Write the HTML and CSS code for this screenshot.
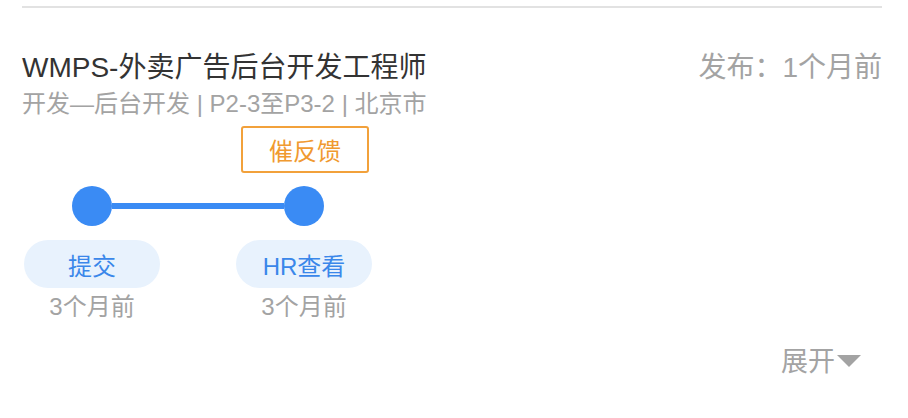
FILE: index.html
```html
<!DOCTYPE html>
<html>
	<head>
		<meta charset="UTF-8">
		<title>投递进度</title>
		<link rel="stylesheet" href="styles.css">
	</head>
	<body>
		<div class="card">
			<div class="divider"></div>
			<div class="head">
				<div class="title">WMPS-外卖广告后台开发工程师</div>
				<div class="pub">发布：1个月前</div>
			</div>
			<div class="sub">开发—后台开发 | P2-3至P3-2 | 北京市</div>

			<div class="progress">
				<div class="feedback-row">
					<div class="btn-feedback">催反馈</div>
				</div>
				<div class="track">
					<span class="dot"></span>
					<span class="bar"></span>
					<span class="dot"></span>
				</div>
				<ul class="steps">
					<li>
						<span class="pill">提交</span>
						<span class="time">3个月前</span>
					</li>
					<li>
						<span class="pill">HR查看</span>
						<span class="time">3个月前</span>
					</li>
				</ul>
			</div>

			<div class="more">
				<span>展开</span>
				<i class="arrow"></i>
			</div>
		</div>
	</body>
</html>
```
FILE: styles.css
```css
html, body {
	margin: 0;
	padding: 0;
	background: #fff;
}
ul, li {
	padding: 0;
	margin: 0;
	list-style: none;
}
.card {
	padding: 0 26px 0 22px;
	font-family: "Liberation Sans", "Noto Sans CJK SC", sans-serif;
	color: #333;
}
.divider {
	margin-top: 6px;
	height: 2px;
	background: #e2e2e2;
}
.head {
	display: flex;
	justify-content: space-between;
	align-items: center;
	margin-top: 42px;
	height: 36px;
}
.title {
	font-size: 28px;
	line-height: 36px;
	color: #333;
}
.pub {
	font-size: 28px;
	line-height: 36px;
	color: #a3a3a3;
}
.sub {
	font-size: 24px;
	line-height: 36px;
	color: #a3a3a3;
}

.progress {
	margin-top: 4px;
	margin-left: 2px;
}
.feedback-row {
	display: flex;
	padding-left: 217px;
}
.btn-feedback {
	box-sizing: border-box;
	width: 128px;
	height: 47px;
	border: 2px solid #f2a13b;
	border-radius: 3px;
	color: #f09a30;
	font-size: 24px;
	display: flex;
	align-items: center;
	justify-content: center;
}
.track {
	display: flex;
	align-items: center;
	margin-top: 13px;
	padding-left: 48px;
}
.dot {
	width: 40px;
	height: 40px;
	border-radius: 50%;
	background: #3a8bf4;
}
.bar {
	width: 172px;
	height: 6px;
	background: #3a8bf4;
}
.steps {
	display: grid;
	grid-template-columns: 136px 136px;
	column-gap: 76px;
	margin-top: 14px;
}
.steps li {
	display: flex;
	flex-direction: column;
	align-items: center;
}
.pill {
	width: 136px;
	height: 48px;
	border-radius: 24px;
	background: #e8f2fd;
	color: #3a87ea;
	font-size: 24px;
	display: flex;
	align-items: center;
	justify-content: center;
}
.time {
	margin-top: 5px;
	font-size: 24px;
	line-height: 28px;
	color: #a3a3a3;
}

.more {
	display: flex;
	justify-content: flex-end;
	align-items: flex-start;
	margin-top: 26px;
	padding-right: 21px;
	font-size: 27px;
	line-height: 30px;
	color: #a3a3a3;
}
.arrow {
	margin-top: 8px;
	margin-left: 2px;
	width: 0;
	height: 0;
	border-left: 12.5px solid transparent;
	border-right: 12.5px solid transparent;
	border-top: 12px solid #a3a3a3;
}
```
